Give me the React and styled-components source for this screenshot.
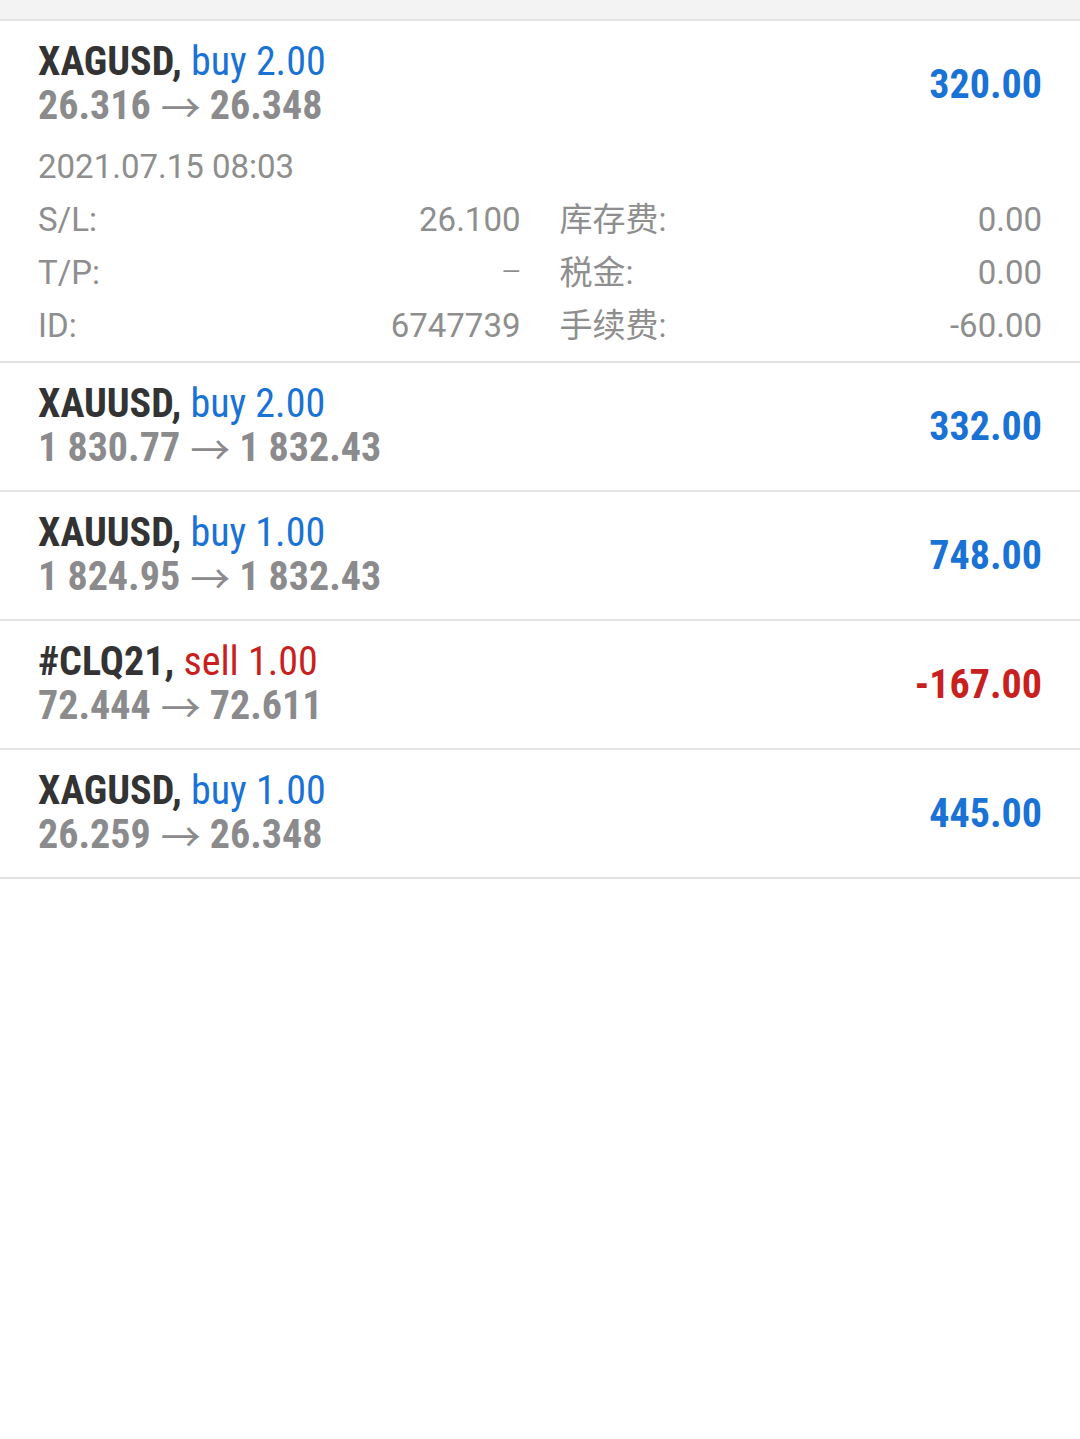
import React from 'react';
import styled, { createGlobalStyle } from 'styled-components';

const GlobalStyle = createGlobalStyle`
  html, body {
    margin: 0;
    padding: 0;
    background: #fff;
  }
  body {
    font-family: Roboto, "Noto Sans", "Noto Sans CJK SC", sans-serif;
  }
`;

const COND = `"Roboto Condensed", "Liberation Sans Narrow", "DejaVu Sans Condensed", Roboto, "Noto Sans CJK SC", sans-serif`;

const trades = [
  {
    symbol: 'XAGUSD',
    side: 'buy',
    volume: '2.00',
    open: '26.316',
    close: '26.348',
    profit: '320.00',
    details: {
      time: '2021.07.15 08:03',
      sl: '26.100',
      tp: '\u2014',
      id: '6747739',
      swap: '0.00',
      taxes: '0.00',
      commission: '-60.00',
    },
  },
  { symbol: 'XAUUSD', side: 'buy', volume: '2.00', open: '1 830.77', close: '1 832.43', profit: '332.00' },
  { symbol: 'XAUUSD', side: 'buy', volume: '1.00', open: '1 824.95', close: '1 832.43', profit: '748.00' },
  { symbol: '#CLQ21', side: 'sell', volume: '1.00', open: '72.444', close: '72.611', profit: '-167.00' },
  { symbol: 'XAGUSD', side: 'buy', volume: '1.00', open: '26.259', close: '26.348', profit: '445.00' },
];

export default function App() {
  return (
    <Page>
      <GlobalStyle />
      <TopBar />
      <List>
        {trades.map((t, i) => (
          <Trade key={i} trade={t} />
        ))}
      </List>
    </Page>
  );
}

function Trade({ trade }) {
  const sell = trade.side === 'sell';
  const d = trade.details;
  return (
    <Row $expanded={!!d}>
      <Header>
        <div>
          <Title>
            {trade.symbol},{' '}
            <Side $sell={sell}>
              {trade.side} {trade.volume}
            </Side>
          </Title>
          <Prices>
            {trade.open}<Arrow>→</Arrow>{trade.close}
          </Prices>
        </div>
        <Profit $sell={sell}>{trade.profit}</Profit>
      </Header>
      {d && (
        <Details>
          <Time>{d.time}</Time>
          <Pair>
            <span>S/L:</span>
            <span>{d.sl}</span>
          </Pair>
          <Pair>
            <span>库存费:</span>
            <span>{d.swap}</span>
          </Pair>
          <Pair>
            <span>T/P:</span>
            <Dash>{d.tp}</Dash>
          </Pair>
          <Pair>
            <span>税金:</span>
            <span>{d.taxes}</span>
          </Pair>
          <Pair>
            <span>ID:</span>
            <span>{d.id}</span>
          </Pair>
          <Pair>
            <span>手续费:</span>
            <span>{d.commission}</span>
          </Pair>
        </Details>
      )}
    </Row>
  );
}

const Page = styled.div`
  min-height: 1439px;
  background: #fff;
`;

const TopBar = styled.div`
  height: 19px;
  background: #f3f3f3;
  border-bottom: 2px solid #e4e4e4;
`;

const List = styled.div`
  display: flex;
  flex-direction: column;
`;

const Row = styled.div`
  box-sizing: border-box;
  height: ${(p) => (p.$expanded ? 'auto' : '129px')};
  padding: 19px 38px 0;
  border-bottom: 2px solid #e3e3e3;
`;

const Header = styled.div`
  display: flex;
  justify-content: space-between;
  align-items: center;
`;

const Title = styled.div`
  font-family: ${COND};
  font-weight: 700;
  font-size: 40px;
  line-height: 44px;
  height: 44px;
  color: #333;
  white-space: nowrap;
`;

const Side = styled.span`
  display: inline-block;
  height: 44px;
  font-weight: 400;
  color: ${(p) => (p.$sell ? '#c8201e' : '#1a72d4')};
`;

const Prices = styled.div`
  font-family: ${COND};
  font-weight: 700;
  font-size: 40px;
  line-height: 44px;
  height: 44px;
  color: #8b8b8d;
  white-space: nowrap;
`;

const Arrow = styled.span`
  display: inline-block;
  height: 44px;
  margin: 0 9px 0 10px;
  font-family: "Noto Sans CJK SC", sans-serif;
  font-weight: 400;
  font-size: 40px;
  line-height: 44px;
  vertical-align: top;
`;

const Profit = styled.div`
  font-family: ${COND};
  font-weight: 700;
  font-size: 40px;
  color: ${(p) => (p.$sell ? '#c8201e' : '#1a72d4')};
`;

const Details = styled.div`
  display: grid;
  grid-template-columns: 1fr 1fr;
  column-gap: 39px;
  margin-top: 12px;
  padding-bottom: 9px;
  font-size: 33px;
  line-height: 53px;
  color: #8e8e8e;
`;

const Time = styled.div`
  grid-column: 1 / -1;
`;

const Pair = styled.div`
  display: flex;
  justify-content: space-between;
  white-space: nowrap;
`;

const Dash = styled.span`
  font-size: 24px;
  line-height: 53px;
`;
